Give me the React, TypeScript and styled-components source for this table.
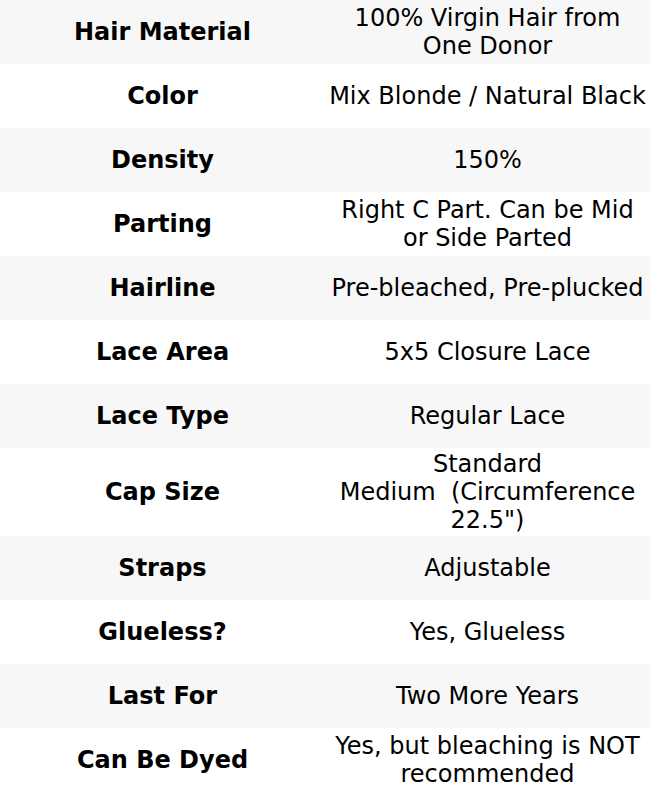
import styled, { createGlobalStyle } from "styled-components";

const GlobalStyle = createGlobalStyle`
  html, body {
    margin: 0;
    padding: 0;
    background: #fff;
  }
  body {
    font-family: "DejaVu Sans", "Noto Sans CJK SC", sans-serif;
    color: #000;
  }
`;

interface Spec {
  label: string;
  value: React.ReactNode;
}

const specs: Spec[] = [
  { label: "Hair Material", value: "100% Virgin Hair from One Donor" },
  { label: "Color", value: "Mix Blonde / Natural Black" },
  { label: "Density", value: "150%" },
  { label: "Parting", value: "Right C Part. Can be Mid or Side Parted" },
  { label: "Hairline", value: "Pre-bleached, Pre-plucked" },
  { label: "Lace Area", value: "5x5 Closure Lace" },
  { label: "Lace Type", value: "Regular Lace" },
  {
    label: "Cap Size",
    value: (
      <>
        Standard
        <br />
        Medium{"\u00a0"} (Circumference 22.5")
      </>
    ),
  },
  { label: "Straps", value: "Adjustable" },
  { label: "Glueless?", value: "Yes, Glueless" },
  { label: "Last For", value: "Two More Years" },
  { label: "Can Be Dyed", value: "Yes, but bleaching is NOT recommended" },
];

const App = () => {
  return (
    <>
      <GlobalStyle />
      <SpecTable>
        <tbody>
          {specs.map((spec, index) => (
            <Row key={spec.label} $striped={index % 2 === 0}>
              <Label>{spec.label}</Label>
              <Value>{spec.value}</Value>
            </Row>
          ))}
        </tbody>
      </SpecTable>
    </>
  );
};

export default App;

const SpecTable = styled.table`
  width: 650px;
  border-collapse: collapse;
  table-layout: fixed;
  font-size: 24px;
  line-height: 28px;
`;

const Row = styled.tr<{ $striped: boolean }>`
  height: 64px;
  background: ${({ $striped }) => ($striped ? "#f7f7f7" : "#ffffff")};
`;

const Label = styled.td`
  width: 50%;
  padding: 2px 4px;
  text-align: center;
  vertical-align: middle;
  font-weight: 700;
`;

const Value = styled.td`
  width: 50%;
  padding: 2px 4px;
  text-align: center;
  vertical-align: middle;
  font-weight: 400;
`;
